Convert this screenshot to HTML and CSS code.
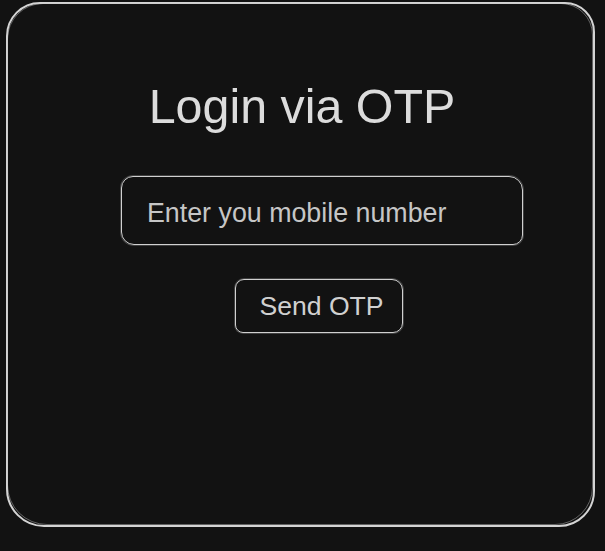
FILE: index.html
```html
<!DOCTYPE html>
<html lang="en">
<head>
<meta charset="utf-8">
<title>Login via OTP</title>
<link rel="stylesheet" href="styles.css">
</head>
<body>
  <main class="card">
    <h1 class="title">Login via OTP</h1>
    <form class="otp-form">
      <input class="phone-input" type="tel" placeholder="Enter you mobile number">
      <button class="send-btn" type="button">Send OTP</button>
    </form>
  </main>
</body>
</html>
```
FILE: styles.css
```css
html, body {
  margin: 0;
  background: #121212;
}
body {
  padding: 2px 10px 0 6px;
  font-family: "Liberation Sans", Arial, sans-serif;
  color: #dcdcdc;
}
.card {
  position: relative;
  box-sizing: border-box;
  width: 589px;
  height: 525px;
  border: 2px solid #d4d4d4;
  border-radius: 34px 30px 36px 38px;
  display: flex;
  flex-direction: column;
}
.card::after {
  content: "";
  position: absolute;
  inset: -1px 0 0 -1px;
  border: 1px solid rgba(200, 200, 200, 0.45);
  border-radius: 36px 32px 38px 40px;
  pointer-events: none;
}
.title {
  margin: 74px 0 0 0;
  padding-left: 3px;
  text-align: center;
  font-size: 48.4px;
  font-weight: normal;
  line-height: 56px;
  color: #dcdcdc;
}
.otp-form {
  margin: 0;
  padding: 42px 0 0 113px;
  display: flex;
  flex-direction: column;
  align-items: flex-start;
}
.phone-input {
  box-sizing: border-box;
  width: 402px;
  height: 69px;
  margin: 0;
  padding: 5px 0 0 25px;
  background: transparent;
  border: 1.5px solid #d0d0d0;
  border-radius: 12px 14px 10px 13px;
  font-family: "Liberation Sans", Arial, sans-serif;
  font-size: 26.8px;
  color: #d0d0d0;
  outline: none;
  box-shadow: 0 0 0 1px rgba(200, 200, 200, 0.25);
}
.phone-input::placeholder {
  color: #c6c6c6;
}
.send-btn {
  box-sizing: border-box;
  width: 168px;
  height: 54px;
  margin: 34px 0 0 114px;
  padding: 0 0 0 5px;
  background: transparent;
  border: 1.5px solid #d0d0d0;
  border-radius: 9px 11px 10px 8px;
  font-family: "Liberation Sans", Arial, sans-serif;
  font-size: 26.6px;
  color: #d0d0d0;
  cursor: pointer;
  box-shadow: 0 0 0 1px rgba(200, 200, 200, 0.25);
}
```
